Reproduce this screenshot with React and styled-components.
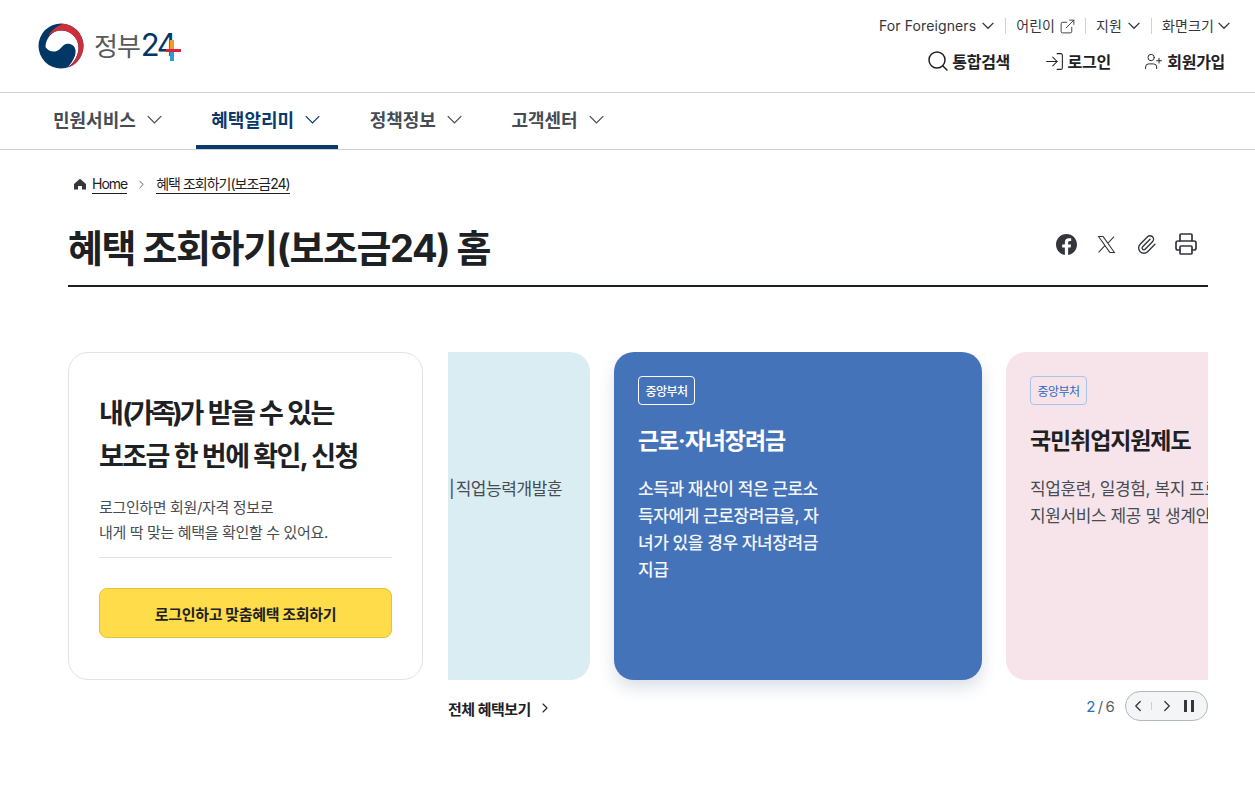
import React from "react";
import styled, { createGlobalStyle } from "styled-components";
import { ChevronLeft, ChevronRight, ExternalLink, Search, LogIn, UserPlus, Paperclip, Printer } from "lucide-react";

const Global = createGlobalStyle`
  html, body { margin: 0; padding: 0; background: #fff; }
  body { font-family: Inter, "Noto Sans CJK KR", sans-serif; color: #1e2124; }
  * { box-sizing: border-box; }
`;
const Page = styled.div`width: 1255px; height: 803px; overflow: hidden;`;
const Header = styled.header`
  height: 93px; border-bottom: 1px solid #cdd1d5;
  display: flex; justify-content: space-between;
  padding: 0 30px 0 38px;
`;
const Logo = styled.a`display: flex; align-items: center; gap: 10px; height: 92px;`;
const LogoText = styled.div`position: relative; display: flex; align-items: baseline; font-size: 26px; line-height: 30px; letter-spacing: -1px; font-weight: 400; color: #58595b;`;
const LogoNum = styled.span`color: #003764; font-size: 31px; font-weight: 400; letter-spacing: -2.5px; margin-left: 1px;`;
const LogoPlus = styled.svg`position: absolute; right: -8px; top: 10px;`;
const HeaderRight = styled.div`display: flex; flex-direction: column; align-items: flex-end; padding-top: 16px;`;
const Util = styled.div`display: flex; align-items: center; height: 20px; margin-right: -5px;`;
const UtilItem = styled.span`
  display: flex; align-items: center; gap: ${p => p.$end ? 4 : 6}px; font-size: 14px; line-height: 16px; color: #33363d; letter-spacing: 0.1px;
  padding: 0 ${p => p.$end ? 0 : 11}px 0 10px;
  & + & { border-left: 1px solid #cdd1d5; }
`;
const ExtIcon = styled(ExternalLink)`margin: -2px;`;
const Main = styled.div`display: flex; align-items: center; gap: 33.5px; margin-top: 13px; height: 24px;`;
const MainItem = styled.span`display: flex; align-items: center; gap: ${p => p.$gap || 4}px; font-size: 16px; font-weight: 700; letter-spacing: -0.3px; color: #1e2124;`;
const Nav = styled.nav`height: 57px; border-bottom: 1px solid #cdd1d5; display: flex; gap: 16.5px; padding-left: 38px;`;
const NavItem = styled.a`
  display: flex; align-items: center; gap: 11px; height: 56px; padding: 0 18px 0 15px;
  font-size: 18px; font-weight: 700; letter-spacing: 0;
  color: ${p => p.$active ? "#0b3a6a" : "#464c53"};
  border-bottom: 4px solid ${p => p.$active ? "#0b3a6a" : "transparent"};
`;
const Content = styled.main`width: 1140px; margin-left: 68px;`;
const Crumbs = styled.div`display: flex; align-items: center; height: 20px; margin-top: 24px; padding-left: 5px; font-size: 14px; letter-spacing: -1px; color: #1e2124;`;
const CrumbLink = styled.span`border-bottom: 1px solid #1e2124; line-height: 18px; margin-left: ${p => p.$ml || 0}px;`;
const Sep = styled.span`display: flex; margin: 0 8px 0 8px; color: #33363d;`;
const TitleRow = styled.div`display: flex; justify-content: space-between; align-items: flex-start; height: 93px; border-bottom: 2px solid #1e2124;`;
const Title = styled.h1`margin: 29px 0 0; font-size: 38px; line-height: 50px; font-weight: 700; letter-spacing: -1.45px; color: #1e2124;`;
const Share = styled.div`display: flex; align-items: center; gap: 16px; margin: 38px 10px 0 0; color: #33363d;`;
const ShareBtn = styled.span`display: flex; width: 24px; height: 24px; align-items: center; justify-content: center;`;
const Row = styled.section`display: flex; margin-top: 65px; gap: 25px;`;
const LoginCard = styled.div`
  width: 355px; height: 328px; flex: none; border: 1px solid #e1e4e7; border-radius: 20px; padding: 39px 30px 0;
`;
const LoginTitle = styled.h2`margin: 0; font-size: 27px; line-height: 43px; font-weight: 700; letter-spacing: -1.55px; color: #1e2124;`;
const Tight = styled.span`letter-spacing: -3.2px;`;
const LoginDesc = styled.p`
  margin: 17px 0 0; padding-bottom: 12px; font-size: 15px; line-height: 25px; letter-spacing: -0.35px; color: #464c53;
  border-bottom: 1px solid #e1e4e7;
`;
const LoginBtn = styled.button`
  display: block; width: 100%; height: 50px; margin-top: 30px; background: #ffdd4a; border: 1px solid #e5c23c; border-radius: 8px;
  font: 700 15px "Noto Sans CJK KR", sans-serif; letter-spacing: -0.3px; color: #1e2124;
`;
const Carousel = styled.div`width: 760px; flex: none;`;
const Viewport = styled.div`width: 760px; height: 352px; margin-bottom: -19px; overflow: hidden;`;
const Track = styled.div`display: flex; gap: 24px; margin-left: -226px;`;
const Slide = styled.article`
  width: 368px; height: 328px; flex: none; border-radius: 20px; padding: 24px;
  background: ${p => p.$bg};
  color: ${p => p.$light ? "#fff" : "#1e2124"};
  box-shadow: ${p => p.$light ? "0 8px 16px rgba(30,60,110,.16)" : "none"};
`;
const Tag = styled.span`
  display: inline-flex; align-items: center; justify-content: center; width: 57px; height: 29px; border-radius: 4px;
  font-size: 12px; letter-spacing: -0.5px; font-weight: ${p => p.$light ? 500 : 400};
  border: 1px solid ${p => p.$light ? "#fff" : "#a6c4ea"};
  color: ${p => p.$light ? "#fff" : "#2a6bc0"};
`;
const SlideTitle = styled.h3`margin: 18px 0 0; font-size: 23px; line-height: 36px; font-weight: 700; letter-spacing: -1.1px;`;
const SlideText = styled.p`
  margin: 17px 0 0; width: 185px; font-size: 17px; line-height: 27px; letter-spacing: -0.4px;
  white-space: ${p => p.$nowrap ? "nowrap" : "normal"};
  color: ${p => p.$light ? "#f4f6fa" : "#464c53"};
  font-weight: ${p => p.$light ? 500 : 400};
`;
const FirstText = styled(SlideText)`margin-top: 100px; margin-left: 203px; word-spacing: -3px;`;
const Foot = styled.div`display: flex; justify-content: space-between; align-items: center; height: 42px;`;
const All = styled.a`display: flex; align-items: center; gap: 6px; margin-top: 4px; font-size: 15px; font-weight: 700; letter-spacing: -0.5px; color: #1e2124;`;
const Pager = styled.div`display: flex; align-items: center; gap: 10px;`;
const Count = styled.span`font-size: 15px; color: #58616a; letter-spacing: 0.1px; word-spacing: -2px;`;
const Cur = styled.b`font-weight: 400; color: #2a6bc0;`;
const Controls = styled.div`
  width: 83px; height: 30px; border: 1px solid #b1b8be; border-radius: 15px; background: #f4f5f6;
  display: flex; align-items: center; padding-left: 3px; color: #33363d;
`;
const Divider = styled.i`width: 1px; height: 8px; background: #cdd1d5; margin: 0 6px 0 4px;`;
const PauseIcon = styled.svg`margin-left: 8px;`;

const Chev = ({ w = 12, sw = 1.3 }) => (
  <svg width={w} height={w * 0.6} viewBox="0 0 20 12" fill="none" stroke="currentColor" strokeWidth={sw * 20 / w} aria-hidden="true">
    <path d="M1 1.500 10 10.500 19 1.500" />
  </svg>
);

const Taegeuk = () => (
  <svg width="46" height="46" viewBox="0 0 46 46" aria-hidden="true">
    <circle cx="23" cy="23" r="22.500" fill="#003764" />
    <path d="M7.500 24C7.500 15 15 7 23 7.500 32 7 41 15 40.500 25 40 33 36 40 30 44 35 38 38 33 37.500 27.500 37 22 32 20 28 21 24 22 22 28 17 28.500 13 29 9 27 7.500 24Z" fill="#fff" />
    <path d="M10 13C14 6 20 3 24.500 .7A22.500 22.500 0 0 1 30 44.500C37 39 41 31.500 40.500 24 40 14 31 7 23 7.500 18 7.800 13 10 10 13Z" fill="#cd2e3a" />
  </svg>
);

export default function App() {
  return (
    <Page>
      <Global />
      <Header>
        <Logo>
          <Taegeuk />
          <LogoText>
            정부<LogoNum>24</LogoNum>
            <LogoPlus width="16" height="21" viewBox="0 0 16 21" aria-hidden="true">
              <rect x="4" y="0" width="4" height="10" fill="#f39a2d" />
              <rect x="4" y="10" width="4" height="11" fill="#2e9bd6" />
              <rect x="0" y="9" width="15" height="3" fill="#d8243c" />
            </LogoPlus>
          </LogoText>
        </Logo>
        <HeaderRight>
          <Util>
            <UtilItem>For Foreigners <Chev /></UtilItem>
            <UtilItem>어린이 <ExtIcon size={17} strokeWidth={1.3} /></UtilItem>
            <UtilItem>지원 <Chev /></UtilItem>
            <UtilItem $end>화면크기 <Chev /></UtilItem>
          </Util>
          <Main>
            <MainItem $gap={2}><Search size={24} strokeWidth={1.5} />통합검색</MainItem>
            <MainItem $gap={3}><LogIn size={21} strokeWidth={1.2} />로그인</MainItem>
            <MainItem $gap={4}><UserPlus size={19} strokeWidth={1.2} />회원가입</MainItem>
          </Main>
        </HeaderRight>
      </Header>
      <Nav>
        <NavItem>민원서비스 <Chev w={15} /></NavItem>
        <NavItem $active>혜택알리미 <Chev w={15} /></NavItem>
        <NavItem>정책정보 <Chev w={15} /></NavItem>
        <NavItem>고객센터 <Chev w={15} /></NavItem>
      </Nav>
      <Content>
        <Crumbs>
          <svg width="14" height="14" viewBox="0 0 14 14" aria-hidden="true"><path d="M7 1.800 13 7v5.500H9V9H5v3.500H1V7Z" fill="#33363d" /></svg>
          <CrumbLink $ml={5}>Home</CrumbLink>
          <Sep><ChevronRight size={13} strokeWidth={1.4} /></Sep>
          <CrumbLink>혜택 조회하기(보조금24)</CrumbLink>
        </Crumbs>
        <TitleRow>
          <Title>혜택 조회하기(보조금24) 홈</Title>
          <Share>
            <ShareBtn>
              <svg width="21" height="21" viewBox="0 0 24 24" fill="#33363d" aria-hidden="true"><path d="M24 12.070C24 5.400 18.630 0 12 0S0 5.400 0 12.070c0 6.030 4.390 11.020 10.130 11.930v-8.440H7.080v-3.490h3.050V9.410c0-3.020 1.790-4.690 4.530-4.690 1.310 0 2.680.24 2.680.24v2.970h-1.510c-1.490 0-1.960.93-1.960 1.880v2.260h3.330l-.53 3.490h-2.800V24C19.610 23.090 24 18.100 24 12.070Z" /></svg>
            </ShareBtn>
            <ShareBtn>
              <svg width="19" height="19" viewBox="0 0 24 24" fill="none" stroke="#33363d" strokeWidth="1.300" aria-hidden="true"><path d="M2 2h5.800L22 22h-5.800ZM2 22 10.500 12.700M21.500 2 13.300 11" /></svg>
            </ShareBtn>
            <ShareBtn><Paperclip size={21} strokeWidth={1.6} /></ShareBtn>
            <ShareBtn><Printer size={24} strokeWidth={1.7} /></ShareBtn>
          </Share>
        </TitleRow>
        <Row>
          <LoginCard>
            <LoginTitle>내<Tight>(가족)</Tight>가 받을 수 있는<br />보조금 한 번에 확인, 신청</LoginTitle>
            <LoginDesc>로그인하면 회원/자격 정보로<br />내게 딱 맞는 혜택을 확인할 수 있어요.</LoginDesc>
            <LoginBtn>로그인하고 맞춤혜택 조회하기</LoginBtn>
          </LoginCard>
          <Carousel>
            <Viewport>
              <Track>
                <Slide $bg="#d9edf3">
                  <FirstText $nowrap>| 직업능력개발훈</FirstText>
                </Slide>
                <Slide $bg="#4473b9" $light>
                  <Tag $light>중앙부처</Tag>
                  <SlideTitle>근로·자녀장려금</SlideTitle>
                  <SlideText $light>소득과 재산이 적은 근로소득자에게 근로장려금을, 자녀가 있을 경우 자녀장려금 지급</SlideText>
                </Slide>
                <Slide $bg="#f7e4ea">
                  <Tag>중앙부처</Tag>
                  <SlideTitle>국민취업지원제도</SlideTitle>
                  <SlideText $nowrap>직업훈련, 일경험, 복지 프로그램 등<br />지원서비스 제공 및 생계안정 지원</SlideText>
                </Slide>
              </Track>
            </Viewport>
            <Foot>
              <All>전체 혜택보기 <ChevronRight size={16} strokeWidth={1.6} /></All>
              <Pager>
                <Count><Cur>2</Cur> / 6</Count>
                <Controls>
                  <ChevronLeft size={18} strokeWidth={1.7} />
                  <Divider />
                  <ChevronRight size={18} strokeWidth={1.7} />
                  <PauseIcon width="10" height="12" viewBox="0 0 10 12" fill="currentColor" aria-hidden="true">
                    <rect x="0" y="0" width="3" height="12" />
                    <rect x="7" y="0" width="3" height="12" />
                  </PauseIcon>
                </Controls>
              </Pager>
            </Foot>
          </Carousel>
        </Row>
      </Content>
    </Page>
  );
}
